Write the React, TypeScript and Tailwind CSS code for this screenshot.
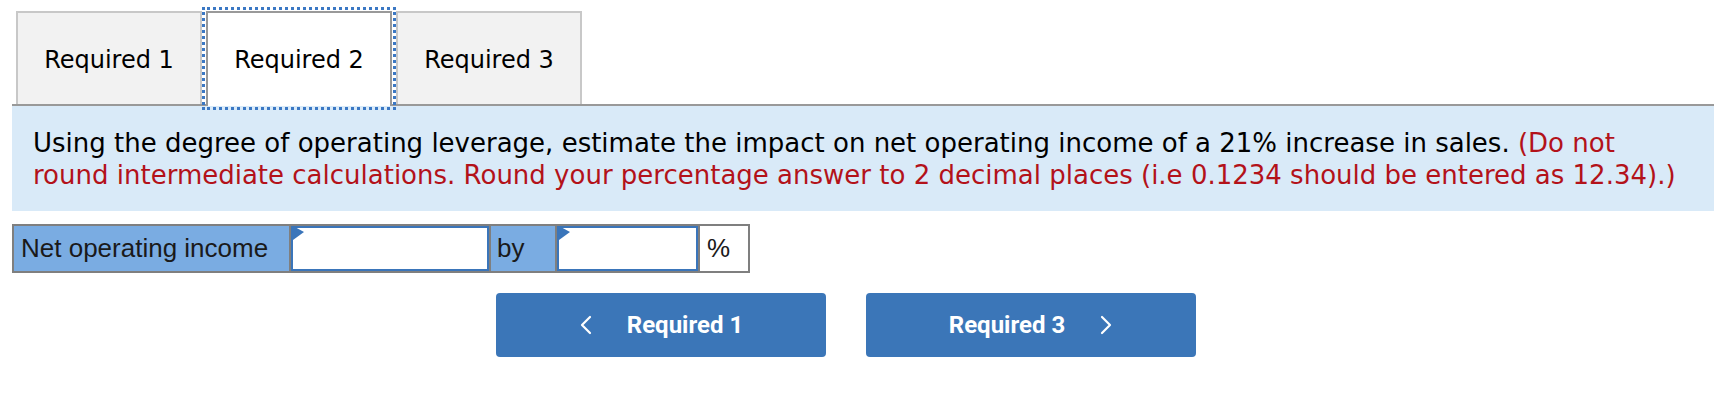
import React from "react";

function Flag() {
  return (
    <svg className="absolute left-[2px] top-0" width="12" height="15" viewBox="0 0 12 15">
      <polygon points="0,0 11,6 0,14" fill="#3a75ba" />
    </svg>
  );
}

function Chevron({ dir }: { dir: "left" | "right" }) {
  return (
    <svg width="14" height="20" viewBox="0 0 14 20" fill="none">
      <polyline
        points={dir === "left" ? "11,2 3,10 11,18" : "3,2 11,10 3,18"}
        stroke="white"
        strokeWidth="2.2"
        strokeLinecap="round"
        strokeLinejoin="round"
      />
    </svg>
  );
}

export default function App() {
  const tabs = ["Required 1", "Required 2", "Required 3"];
  const active = 1;

  return (
    <div className="h-[416px] w-[1732px] bg-white font-['DejaVu_Sans',Verdana,sans-serif]">
      <div className="w-[1714px] pl-[12px] pt-[11px]">
        {/* tabs */}
        <div className="flex items-end gap-[4px] border-b-2 border-[#999999] pl-[4px]">
          {tabs.map((tab, i) =>
            i === active ? (
              <div
                key={tab}
                className="relative z-10 -mb-[2px] flex h-[95px] w-[186px] items-center justify-center border-2 border-b-0 border-[#999999] bg-white text-[24px] text-black outline-[3px] outline-offset-[1px] outline-[#3b78c4] outline-dotted"
              >
                {tab}
              </div>
            ) : (
              <div
                key={tab}
                className="flex h-[93px] w-[186px] items-center justify-center border-2 border-b-0 border-[#c8c8c8] bg-[#f2f2f2] pt-[3px] text-[24px] text-black"
              >
                {tab}
              </div>
            )
          )}
        </div>

        {/* question */}
        <div className="bg-[#d9eaf8] pb-[20px] pl-[21px] pt-[21px] text-[26px] leading-[32px] text-black">
          Using the degree of operating leverage, estimate the impact on net operating income of a 21% increase in sales.{" "}
          <span className="text-[#b3121a]">
            (Do not
            <br />
            round intermediate calculations. Round your percentage answer to 2 decimal places (i.e 0.1234 should be entered as 12.34).)
          </span>
        </div>

        {/* answer row */}
        <div className="mt-[13px] flex h-[49px] w-fit border-2 border-[#7f7f7f] font-['Liberation_Sans',Arial,sans-serif] text-[26px] text-[#1a1a1a]">
          <div className="flex w-[275px] items-center bg-[#7aace2] pl-[7px]">Net operating income</div>
          <div className="relative w-[200px] border-l-2 border-[#7f7f7f]">
            <div className="h-full w-full border-2 border-[#3a75ba] bg-white" />
            <Flag />
          </div>
          <div className="flex w-[66px] items-center border-l-2 border-[#7f7f7f] bg-[#7aace2] pl-[6px]">by</div>
          <div className="relative w-[143px] border-l-2 border-[#7f7f7f]">
            <div className="h-full w-full border-2 border-[#3a75ba] bg-white" />
            <Flag />
          </div>
          <div className="flex w-[50px] items-center border-l-2 border-[#7f7f7f] bg-white pl-[7px]">%</div>
        </div>
      </div>

      {/* nav buttons */}
      <div className="mt-[20px] flex gap-[40px] pl-[496px] font-['Roboto',sans-serif] text-[24px] font-bold text-white">
        <button className="flex h-[64px] w-[330px] items-center justify-center gap-[34px] rounded-[4px] bg-[#3b76b8]">
          <Chevron dir="left" />
          <span>Required 1</span>
        </button>
        <button className="flex h-[64px] w-[330px] items-center justify-center gap-[34px] rounded-[4px] bg-[#3b76b8]">
          <span>Required 3</span>
          <Chevron dir="right" />
        </button>
      </div>
    </div>
  );
}
